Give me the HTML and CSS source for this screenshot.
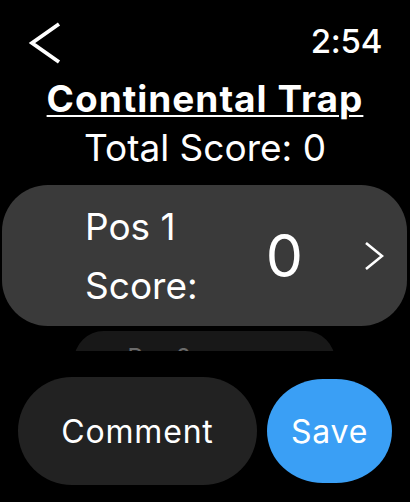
FILE: index.html
```html
<!DOCTYPE html>
<html lang="en">
<head>
<meta charset="utf-8">
<title>Continental Trap</title>
<link rel="stylesheet" href="styles.css">
</head>
<body>
<div class="screen">
  <header class="header">
    <svg class="back" width="34" height="42" viewBox="0 0 34 42" aria-label="Back">
      <polyline points="31,2 4,21 31,40" fill="none" stroke="#fff" stroke-width="3.8" stroke-linejoin="miter"/>
    </svg>
    <span class="time">2:54</span>
  </header>
  <h1 class="title">Continental Trap</h1>
  <p class="total">Total Score: 0</p>
  <div class="list">
    <div class="card">
      <div class="label">Pos 1<br>Score:</div>
      <div class="value">0</div>
      <svg class="chev" width="20" height="30" viewBox="0 0 20 30">
        <polyline points="2,2 18,15 2,28" fill="none" stroke="#fff" stroke-width="2.6"/>
      </svg>
    </div>
    <div class="card card-next">
      <div class="label">Pos 2<br>Score:</div>
      <div class="value">0</div>
      <svg class="chev" width="20" height="30" viewBox="0 0 20 30">
        <polyline points="2,2 18,15 2,28" fill="none" stroke="#fff" stroke-width="2.6"/>
      </svg>
    </div>
  </div>
  <div class="actions">
    <button class="btn btn-comment">Comment</button>
    <button class="btn btn-save">Save</button>
  </div>
</div>
</body>
</html>
```

FILE: styles.css
```css
html, body {
  margin: 0;
  padding: 0;
  background: #000;
}

.screen {
  width: 410px;
  height: 502px;
  overflow: hidden;
  color: #fff;
  font-family: Inter, "Noto Sans", sans-serif;
  display: flex;
  flex-direction: column;
}

.header {
  height: 55px;
  padding: 21px 28px 0 28px;
  display: flex;
  justify-content: space-between;
  align-items: flex-start;
}

.back {
  display: block;
  margin-top: 1px;
}

.time {
  font-size: 33px;
  font-weight: 500;
  line-height: 40px;
  letter-spacing: -0.3px;
}

.title {
  margin: 0;
  font-size: 37px;
  font-weight: 700;
  line-height: 45px;
  letter-spacing: 1px;
  text-align: center;
  text-decoration: underline;
  text-decoration-thickness: 2px;
  text-underline-offset: 3px;
}

.total {
  margin: 4px 0 0 0;
  font-size: 37px;
  font-weight: 400;
  line-height: 45px;
  text-align: center;
}

.list {
  margin-top: 15px;
  height: 166px;
  overflow: hidden;
}

.card {
  margin: 0 3px 0 2px;
  height: 141px;
  box-sizing: border-box;
  padding: 12px 23px 11px 83px;
  border-radius: 46px;
  background: #3a3a3a;
  display: flex;
  align-items: center;
}

.label {
  flex: 1;
  font-size: 37px;
  line-height: 59px;
}

.value {
  font-size: 59px;
  line-height: 70px;
  margin-right: 61px;
}

.chev {
  display: block;
}

.card-next {
  margin-top: 5px;
  transform: scale(0.644);
  transform-origin: top center;
  opacity: 0.42;
}

.actions {
  margin-top: 26px;
  padding-left: 18px;
  display: flex;
  align-items: center;
  gap: 10px;
}

.btn {
  border: none;
  color: #fff;
  font-family: Inter, "Noto Sans", sans-serif;
  font-size: 32px;
  font-weight: 400;
  letter-spacing: 0.8px;
  padding: 0;
  cursor: pointer;
}

.btn-comment {
  width: 239px;
  height: 108px;
  border-radius: 54px;
  background: #222222;
}

.btn-save {
  width: 125px;
  height: 104px;
  border-radius: 56px / 52px;
  background: #3a9ff5;
}
```
